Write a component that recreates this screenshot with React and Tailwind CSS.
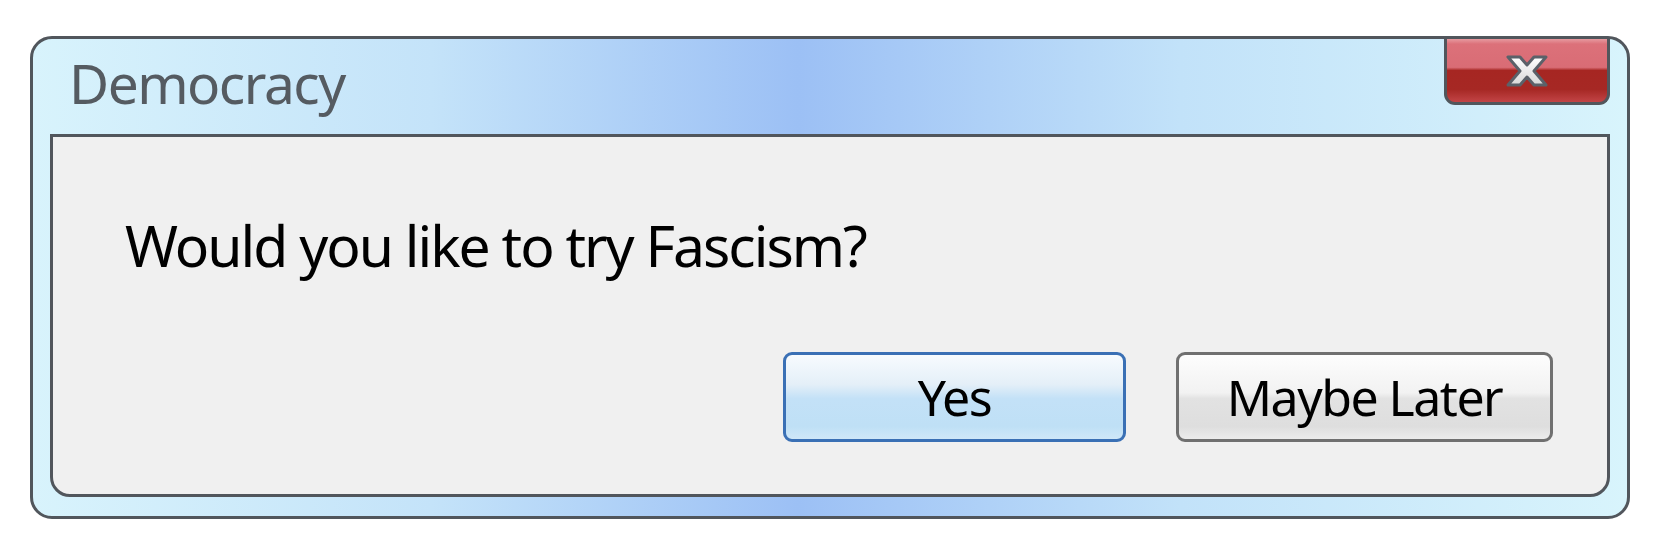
import React from "react";

function CloseX() {
  return (
    <svg width="44" height="34" viewBox="0 0 44 34">
      <defs>
        <linearGradient id="xg" x1="0" y1="0" x2="0" y2="1">
          <stop offset="0" stopColor="#ffffff" />
          <stop offset="1" stopColor="#d8d8d8" />
        </linearGradient>
      </defs>
      <polygon
        points="3,3 15,3 22,11 29,3 41,3 29,17 41,31 29,31 22,23 15,31 3,31 15,17"
        fill="url(#xg)"
        stroke="#5b6169"
        strokeWidth="3"
        strokeLinejoin="round"
      />
    </svg>
  );
}

export default function App() {
  const font = { fontFamily: '"Noto Sans", "Open Sans", sans-serif' };
  return (
    <div className="w-[1664px] h-[556px] bg-white pt-[36px] pl-[30px]" style={font}>
      <div className="w-[1600px] h-[483px] border-[3px] border-[#51565c] rounded-[22px] bg-[linear-gradient(to_right,#d8f3fc_0%,#c4e3f9_25%,#9cc0f5_48%,#c2e2f9_72%,#d8f4fc_100%)] flex flex-col px-[17px] pb-[19px]">
        <div className="h-[95px] flex justify-between items-start">
          <div className="pl-[19px] pt-[16px] text-[55px] leading-none tracking-[-1.5px] text-[#555b61]">Democracy</div>
          <div className="w-[166px] h-[66px] border-[3px] border-t-0 border-[#51565c] rounded-b-[11px] bg-[linear-gradient(to_bottom,#e79aa0_0%,#dc717a_8%,#d96c75_45%,#a62622_50%,#a62824_80%,#c24446_100%)] flex items-center justify-center">
            <CloseX />
          </div>
        </div>
        <div className="flex-1 bg-[#f0f0f0] border-[3px] border-[#51565c] rounded-b-[20px] flex flex-col">
          <div className="pl-[72px] pt-[80px] text-[57px] leading-none tracking-[-2px] text-black">Would you like to try Fascism?</div>
          <div className="flex-1 flex justify-end items-end gap-[50px] pr-[54px] pb-[52px]">
            <button className="w-[343px] h-[90px] border-[3px] border-[#3a70b5] rounded-[9px] bg-[linear-gradient(to_bottom,#f7fbfe_0%,#e4eff8_35%,#c3e1f7_52%,#bfe0f6_85%,#cfe7f8_100%)] text-[50px] leading-none tracking-[-1.5px] text-black">Yes</button>
            <button className="w-[377px] h-[90px] border-[3px] border-[#707070] rounded-[9px] bg-[linear-gradient(to_bottom,#fdfdfd_0%,#f2f2f2_45%,#e2e2e2_52%,#dedede_85%,#ececec_100%)] text-[50px] leading-none tracking-[-1.5px] text-black">Maybe Later</button>
          </div>
        </div>
      </div>
    </div>
  );
}
